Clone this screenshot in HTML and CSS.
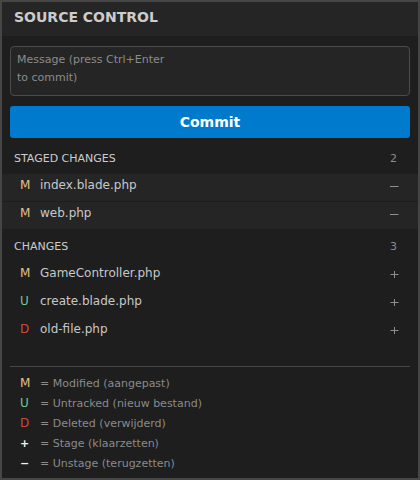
FILE: index.html
```html
<!DOCTYPE html>
<html>
<head>
<meta charset="utf-8">
<link rel="stylesheet" href="styles.css">
</head>
<body>
<div class="panel">
  <div class="title">SOURCE CONTROL</div>
  <div class="commit-area">
    <div class="message"><span class="placeholder">Message (press Ctrl+Enter to commit)</span></div>
    <button class="commit">Commit</button>
  </div>

  <div class="section-header first"><span>STAGED CHANGES</span><span class="count">2</span></div>
  <div class="row staged">
    <span class="status m">M</span><span class="name">index.blade.php</span>
    <svg class="action" width="9" height="9" viewBox="0 0 9 9"><path d="M0 4.5h8.5"/></svg>
  </div>
  <div class="row staged">
    <span class="status m">M</span><span class="name">web.php</span>
    <svg class="action" width="9" height="9" viewBox="0 0 9 9"><path d="M0 4.5h8.5"/></svg>
  </div>

  <div class="section-header"><span>CHANGES</span><span class="count">3</span></div>
  <div class="row">
    <span class="status m">M</span><span class="name">GameController.php</span>
    <svg class="action" width="9" height="9" viewBox="0 0 9 9"><path d="M0.5 4.5h8M4.5 1v7"/></svg>
  </div>
  <div class="row">
    <span class="status u">U</span><span class="name">create.blade.php</span>
    <svg class="action" width="9" height="9" viewBox="0 0 9 9"><path d="M0.5 4.5h8M4.5 1v7"/></svg>
  </div>
  <div class="row">
    <span class="status d">D</span><span class="name">old-file.php</span>
    <svg class="action" width="9" height="9" viewBox="0 0 9 9"><path d="M0.5 4.5h8M4.5 1v7"/></svg>
  </div>

  <div class="divider"></div>
  <div class="legend">
    <div class="legend-row"><span class="key m">M</span>= Modified (aangepast)</div>
    <div class="legend-row"><span class="key u">U</span>= Untracked (nieuw bestand)</div>
    <div class="legend-row"><span class="key d">D</span>= Deleted (verwijderd)</div>
    <div class="legend-row"><span class="key sym">+</span>= Stage (klaarzetten)</div>
    <div class="legend-row"><span class="key sym">−</span>= Unstage (terugzetten)</div>
  </div>
</div>
</body>
</html>
```

FILE: styles.css
```css
html, body {
  margin: 0;
  padding: 0;
  background: #1e1e1e;
}

.panel {
  width: 420px;
  height: 480px;
  box-sizing: border-box;
  border: 2px solid #464646;
  background: #1e1e1e;
  font-family: "DejaVu Sans", sans-serif;
  color: #cccccc;
  display: flex;
  flex-direction: column;
}

.title {
  height: 34px;
  box-sizing: border-box;
  padding: 7px 12px 0;
  background: #252526;
  font-size: 14px;
  font-weight: bold;
  line-height: 16px;
  color: #cccccc;
}

.commit-area {
  padding: 10px 8px 0;
}

.message {
  height: 50px;
  box-sizing: border-box;
  border: 1px solid #4b4b4b;
  border-radius: 4px;
  background: #252526;
  padding: 4px 6px;
  font-size: 11px;
  line-height: 18px;
}

.placeholder {
  display: block;
  width: 160px;
  color: #8b8b8b;
}

.commit {
  display: block;
  width: 100%;
  height: 32px;
  margin-top: 10px;
  border: none;
  border-radius: 3px;
  background: #007acc;
  color: #ffffff;
  font-family: "DejaVu Sans", sans-serif;
  font-size: 14px;
  font-weight: bold;
  line-height: 16px;
  padding: 0;
}

.section-header {
  display: flex;
  justify-content: space-between;
  padding: 9px 21px 7px 12px;
  font-size: 11px;
  line-height: 16px;
  color: #cccccc;
}

.section-header.first {
  padding-top: 13px;
}

.count {
  color: #8b8b8b;
}

.row {
  display: flex;
  align-items: flex-start;
  height: 28px;
  box-sizing: border-box;
  padding: 3px 19px 0 18px;
  border-bottom: 1px solid #1e1e1e;
  font-size: 12px;
  line-height: 16px;
}

.row.staged {
  background: #252526;
}

.status {
  width: 20px;
  flex: none;
}

.name {
  flex: 1;
  color: #c8c8c8;
}

.action {
  flex: none;
  margin-top: 5px;
  fill: none;
  stroke: #8f8f8f;
  stroke-width: 1;
}

.m { color: #e2c08d; }
.u { color: #73c991; }
.d { color: #c74e39; }

.divider {
  margin: 20px 8px 0;
  border-top: 1px solid #474747;
}

.legend {
  padding: 7px 0 0 18px;
}

.legend-row {
  height: 20px;
  font-size: 11px;
  line-height: 20px;
  color: #8b8b8b;
  white-space: nowrap;
}

.key {
  display: inline-block;
  width: 20px;
  font-size: 12px;
  line-height: 1;
}

.key.sym {
  font-size: 11px;
  font-weight: bold;
  color: #f0f0f0;
}
```
